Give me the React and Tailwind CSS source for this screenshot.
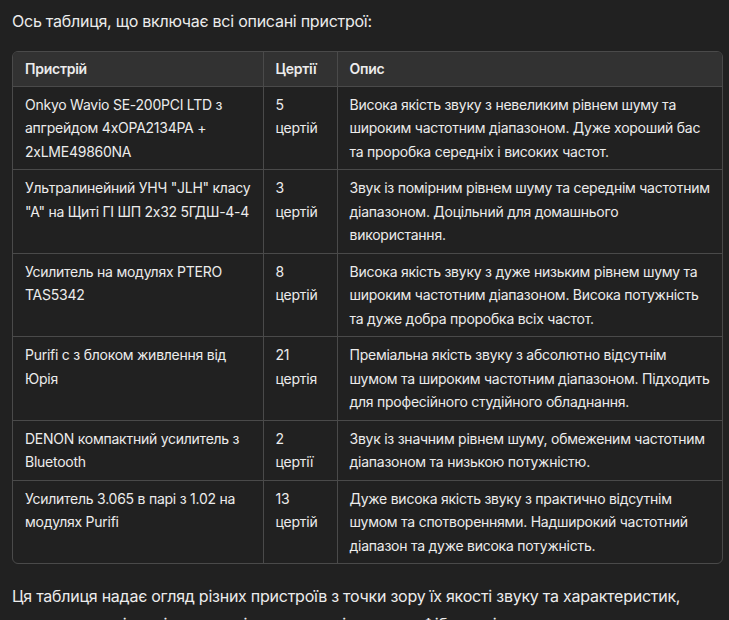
export default function App() {
  const rows = [
    ["Onkyo Wavio SE-200PCI LTD з апгрейдом 4xOPA2134PA + 2xLME49860NA", "5 цертій", "Висока якість звуку з невеликим рівнем шуму та широким частотним діапазоном. Дуже хороший бас та проробка середніх і високих частот."],
    ["Ультралинейний УНЧ \"JLH\" класу \"А\" на Щиті ГІ ШП 2х32 5ГДШ-4-4", "3 цертій", "Звук із помірним рівнем шуму та середнім частотним діапазоном. Доцільний для домашнього використання."],
    ["Усилитель на модулях PTERO TAS5342", "8 цертій", "Висока якість звуку з дуже низьким рівнем шуму та широким частотним діапазоном. Висока потужність та дуже добра проробка всіх частот."],
    ["Purifi с з блоком живлення від Юрія", "21 цертія", "Преміальна якість звуку з абсолютно відсутнім шумом та широким частотним діапазоном. Підходить для професійного студійного обладнання."],
    ["DENON компактний усилитель з Bluetooth", "2 цертії", "Звук із значним рівнем шуму, обмеженим частотним діапазоном та низькою потужністю."],
    ["Усилитель 3.065 в парі з 1.02 на модулях Purifi", "13 цертій", "Дуже висока якість звуку з практично відсутнім шумом та спотвореннями. Надширокий частотний діапазон та дуже висока потужність."],
  ];
  return (
    <div className="min-h-[620px] bg-[#212121] text-[#ececec] pl-[12px] pr-[6px] pt-[7px] tracking-[-0.25px]" style={{ fontFamily: "Inter, 'Noto Sans', sans-serif" }}>
      <p className="text-[16px] leading-[28px]">Ось таблиця, що включає всі описані пристрої:</p>
      <div className="mt-[16px] border border-[#4a4a4a] rounded-[6px] overflow-hidden">
        <table className="w-full border-collapse text-[14px] leading-[23.5px]">
          <thead>
            <tr className="bg-[#323232]">
              <th className="text-left font-semibold px-[12px] py-[5px] w-[250px]">Пристрій</th>
              <th className="text-left font-semibold px-[12px] py-[5px] w-[74px] border-l border-[#4a4a4a]">Цертії</th>
              <th className="text-left font-semibold px-[12px] py-[5px] border-l border-[#4a4a4a]">Опис</th>
            </tr>
          </thead>
          <tbody>
            {rows.map((r, i) => (
              <tr key={i} className="border-t border-[#4a4a4a] align-top">
                <td className="px-[12px] py-[6px]">{r[0]}</td>
                <td className="px-[12px] py-[6px] border-l border-[#4a4a4a]">{r[1]}</td>
                <td className="px-[12px] py-[6px] border-l border-[#4a4a4a]">{r[2]}</td>
              </tr>
            ))}
          </tbody>
        </table>
      </div>
      <p className="mt-[18px] text-[16px] leading-[28px]">Ця таблиця надає огляд різних пристроїв з точки зору їх якості звуку та характеристик, виражених у відповідних цертіях за градацією чисел Фібоначчі.</p>
    </div>
  );
}
